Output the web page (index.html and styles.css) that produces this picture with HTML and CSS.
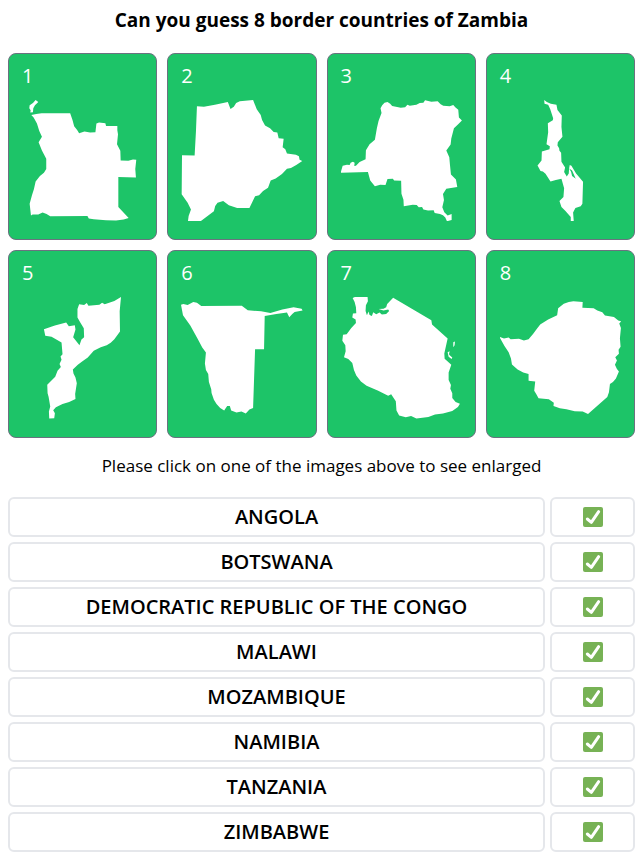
FILE: index.html
```html
<!DOCTYPE html>
<html lang="en">
<head>
<meta charset="utf-8">
<meta name="viewport" content="width=device-width, initial-scale=1">
<title>Border countries of Zambia</title>
<link rel="stylesheet" href="styles.css">
</head>
<body>
<svg class="sprite" aria-hidden="true">
  <symbol id="check" viewBox="0 0 60 60">
    <rect width="60" height="60" rx="6" fill="#77b255"/>
    <path d="M13 36L25 46L47 14" fill="none" stroke="#fff" stroke-width="9" stroke-linecap="round" stroke-linejoin="round"/>
  </symbol>
</svg>
<main class="quiz">
  <h1 class="title">Can you guess 8 border countries of Zambia</h1>
  <div class="cards">
    <button class="card" type="button" aria-label="Country 1"><span class="number">1</span>
      <svg class="shape" viewBox="65 165 365 365"><path d="M106 165L114 171L104 181L99 190L98 202L90 203L91 196L87 190L88 181L98 174ZM93 210L108 207L124 205L210 205L217 225L222 244L231 255L237 265L253 260L270 263L286 262L289 236L297 233L316 235L318 243L352 243L352 256L354 268L351 298L361 318L362 347L385 348L399 344L409 345L406 373L408 398L355 397L355 487L386 520L371 525L348 528L318 527L281 524L266 522L262 514L150 515L139 508L127 504L114 510L97 510L92 513L88 477L95 452L101 433L106 410L119 394L131 384L138 373L138 342L125 317L115 292L125 276L117 258L110 236L100 218Z"/></svg></button>
    <button class="card" type="button" aria-label="Country 2"><span class="number">2</span>
      <svg class="shape" viewBox="63 165 365 365"><path d="M111 184L132 185L165 179L204 171L212 192L222 185L229 174L240 169L280 165L291 193L303 210L307 225L316 242L331 250L342 261L353 263L357 280L372 282L369 307L377 313L382 326L409 330L418 334L420 345L428 349L410 361L394 370L382 372L367 388L348 401L333 407L325 429L310 439L298 452L286 455L269 490L232 490L207 482L190 469L173 474L166 484L162 500L145 513L123 529L84 529L86 514L93 495L83 474L65 449L66 331L104 332L108 260Z"/></svg></button>
    <button class="card" type="button" aria-label="Country 3"><span class="number">3</span>
      <svg class="shape" viewBox="62 165 365 365"><path d="M186 181L193 173L202 171L210 176L216 183L242 188L255 187L262 179L269 182L289 179L299 174L310 173L315 166L334 170L353 169L362 178L370 182L389 184L400 180L406 187L415 194L417 218L426 227L414 239L402 250L394 281L392 299L379 317L388 337L390 360L393 389L408 404L412 427L379 432L369 448L372 466L367 488L373 503L383 513L395 508L395 526L381 530L376 519L369 512L360 508L344 505L341 497L324 498L310 495L306 487L296 488L290 481L278 480L251 485L250 465L244 447L243 408L222 407L218 402L202 403L196 421L180 420L164 425L156 415L150 407L143 382L61 384L67 363L80 360L88 361L91 354L98 351L103 354L102 364L107 363L118 352L136 343L137 316L148 298L164 285L170 250L175 228L184 204L181 190Z"/></svg></button>
    <button class="card" type="button" aria-label="Country 4"><span class="number">4</span>
      <svg class="shape" viewBox="71 165 365 365"><path d="M204 165L212 171L224 176L241 179L244 195L257 212L256 246L259 276L245 292L244 302L249 310L250 318L255 324L256 351L267 368L264 382L272 395L278 386L279 371L285 381L288 394L299 402L288 377L279 371L281 361L286 363L300 386L321 411L319 477L314 485L298 490L291 504L293 529L284 530L284 517L268 499L256 487L250 469L262 457L264 431L256 402L239 406L223 410L208 387L200 380L193 379L184 362L196 347L197 320L220 313L221 304L211 298L216 262L215 235L230 226L231 220L222 192L216 179L205 176Z"/></svg></button>
    <button class="card" type="button" aria-label="Country 5"><span class="number">5</span>
      <svg class="shape" viewBox="65 156 365 365"><path d="M237 178L252 180L260 174L265 182L298 179L306 173L314 178L343 168L363 156L359 199L360 260L343 283L332 294L320 301L302 307L281 318L263 338L246 350L233 360L218 374L220 386L226 398L230 416L225 448L226 463L207 472L187 478L167 488L159 497L164 506L162 521L147 522L146 501L150 486L145 456L142 446L141 420L165 396L172 378L182 367L178 358L184 345L181 335L187 328L184 293L154 276L135 273L131 253L164 242L198 233L206 244L224 241L226 254L219 277L238 301L244 284L252 277L251 250L240 232L232 218L232 192Z"/></svg></button>
    <button class="card" type="button" aria-label="Country 6"><span class="number">6</span>
      <svg class="shape" viewBox="63 156 365 365"><path d="M63 179L70 177L83 180L100 171L111 173L124 183L246 182L264 196L304 199L332 204L368 194L402 187L426 191L429 197L405 201L398 207L389 217L382 203L350 207L315 213L313 313L286 313L280 490L269 495L258 507L245 501L230 504L214 498L210 484L202 484L193 498L181 490L170 478L162 465L155 445L154 434L147 412L145 388L138 376L135 356L138 323L127 308L113 282L91 242L69 211Z"/></svg></button>
    <button class="card" type="button" aria-label="Country 7"><span class="number">7</span>
      <svg class="shape" viewBox="62 156 365 365"><path d="M97 159L106 155L142 156L143 169L137 181L136 198L140 211L145 200L148 210L155 213L159 202L168 208L178 203L185 209L198 207L207 198L204 194L190 197L175 192L190 191L198 187L201 177L219 158L334 226L336 239L383 281L373 326L374 342L394 360L386 383L386 406L393 421L391 432L397 446L397 460L407 472L420 477L414 487L397 499L369 507L345 510L325 517L289 522L273 514L257 518L237 513L229 498L227 470L213 449L204 453L174 438L139 423L122 410L108 392L101 376L96 355L84 343L71 337L76 319L75 301L66 288L68 270L79 268L93 249L107 234L106 224L96 218L98 206L108 205L107 187L103 171ZM400 292L405 290L404 301L400 307ZM383 322L389 319L387 328L390 332L397 338L395 343L386 336Z"/></svg></button>
    <button class="card" type="button" aria-label="Country 8"><span class="number">8</span>
      <svg class="shape" viewBox="71 156 365 365"><path d="M69 276L83 281L97 278L103 283L128 282L143 287L157 283L171 267L181 253L192 239L216 224L243 211L246 190L263 176L278 171L292 169L320 171L319 188L353 190L364 197L379 202L387 212L414 216L427 227L436 229L430 236L435 249L432 280L434 306L428 315L429 327L418 337L423 347L417 360L423 373L429 380L420 401L411 412L402 418L399 443L394 457L336 508L320 501L296 500L271 494L251 491L232 484L233 474L218 464L187 461L180 448L174 438L177 410L157 408L157 388L141 383L124 374L107 359L104 341L97 322L85 304Z"/></svg></button>
  </div>
  <p class="hint">Please click on one of the images above to see enlarged</p>
  <ul class="answers">
    <li class="row"><span class="box name">ANGOLA</span><span class="box"><svg class="check" role="img" aria-label="Correct"><use href="#check"/></svg></span></li>
    <li class="row"><span class="box name">BOTSWANA</span><span class="box"><svg class="check" role="img" aria-label="Correct"><use href="#check"/></svg></span></li>
    <li class="row"><span class="box name">DEMOCRATIC REPUBLIC OF THE CONGO</span><span class="box"><svg class="check" role="img" aria-label="Correct"><use href="#check"/></svg></span></li>
    <li class="row"><span class="box name">MALAWI</span><span class="box"><svg class="check" role="img" aria-label="Correct"><use href="#check"/></svg></span></li>
    <li class="row"><span class="box name">MOZAMBIQUE</span><span class="box"><svg class="check" role="img" aria-label="Correct"><use href="#check"/></svg></span></li>
    <li class="row"><span class="box name">NAMIBIA</span><span class="box"><svg class="check" role="img" aria-label="Correct"><use href="#check"/></svg></span></li>
    <li class="row"><span class="box name">TANZANIA</span><span class="box"><svg class="check" role="img" aria-label="Correct"><use href="#check"/></svg></span></li>
    <li class="row"><span class="box name">ZIMBABWE</span><span class="box"><svg class="check" role="img" aria-label="Correct"><use href="#check"/></svg></span></li>
  </ul>
</main>
</body>
</html>
```
FILE: styles.css
```css
* {
  box-sizing: border-box;
}

body {
  margin: 0;
  background: #fff;
  color: #000;
  font-family: "Open Sans", "Noto Sans", sans-serif;
}

.sprite {
  display: none;
}

.quiz {
  padding: 6px 6px 8px 8px;
}

.title {
  margin: 0 0 19px;
  font-size: 19px;
  font-weight: 700;
  line-height: 28px;
  text-align: center;
}

.cards {
  display: grid;
  grid-template-columns: repeat(4, 1fr);
  gap: 10px;
}

.card {
  display: flex;
  flex-direction: column;
  gap: 10px;
  padding: 8px 13px 18px;
  border: 1px solid #6b7280;
  border-radius: 8px;
  background: #1dc468;
  color: #fff;
  font-family: inherit;
  text-align: left;
  cursor: pointer;
}

.number {
  font-size: 20px;
  line-height: 28px;
}

.shape {
  display: block;
  width: 100%;
  aspect-ratio: 1;
  fill: #fff;
}

.hint {
  margin: 14px 0 17px;
  font-size: 17px;
  line-height: 28px;
  text-align: center;
}

.answers {
  display: grid;
  gap: 5px;
  margin: 0;
  padding: 0;
  list-style: none;
}

.row {
  display: grid;
  grid-template-columns: 1fr 85px;
  gap: 5px;
}

.box {
  display: flex;
  align-items: center;
  justify-content: center;
  min-height: 40px;
  border: 2px solid #e5e7eb;
  border-radius: 6px;
}

.name {
  font-size: 20px;
  font-weight: 600;
  line-height: 28px;
}

.check {
  width: 20px;
  height: 20px;
}
```
